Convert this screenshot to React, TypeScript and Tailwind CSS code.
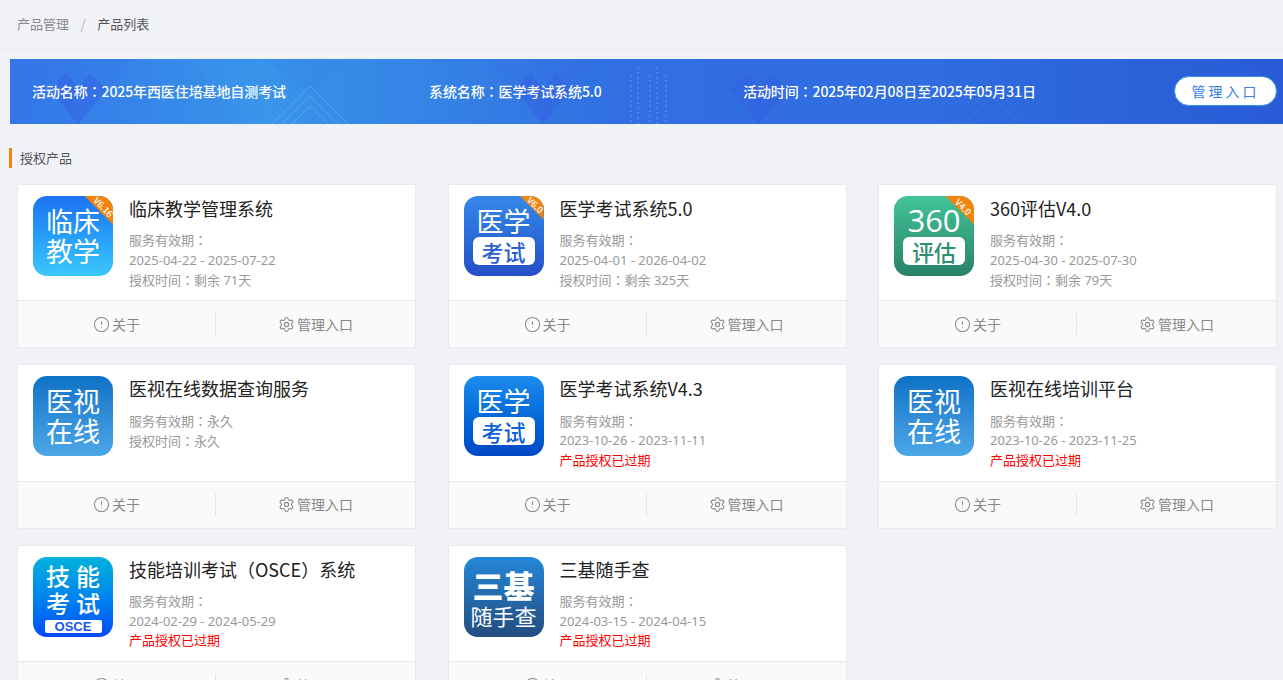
import { CircleAlert, Settings } from "lucide-react";
import type { ReactNode } from "react";

interface Product {
  name: string;
  icon: ReactNode;
  lines: string[];
  expired?: boolean;
}

// full-width punctuation sits centered in the original font, the TC cut does that
const Cjk = ({ text }: { text: string }) => (
  <>
    {text.split(/([：（）])/).map((part, i) =>
      i % 2 ? (
        <span key={i} className="font-['Noto_Sans_CJK_TC',sans-serif]">
          {part}
        </span>
      ) : (
        part
      )
    )}
  </>
);

const Ribbon = ({ text, leg }: { text: string; leg: "sm" | "lg" | "md" }) => (
  <>
    <div className={`absolute top-0 right-0 bg-[#f5840c] [clip-path:polygon(0_0,100%_0,100%_100%)] ${leg === "sm" ? "w-[24px] h-[24px]" : "w-[29px] h-[29px]"}`} />
    <span
      className={`absolute rotate-45 translate-x-1/2 -translate-y-1/2 text-white text-[9px] leading-none whitespace-nowrap font-medium ${
        leg === "sm" ? "top-[9px] right-[8px]" : leg === "md" ? "top-[11px] right-[11px]" : "top-[11px] right-[10px]"
      }`}
    >
      {text}
    </span>
  </>
);

const IconTile = ({ className, children }: { className: string; children: ReactNode }) => (
  <div className={`relative w-20 h-20 shrink-0 rounded-[14px] overflow-hidden text-white flex flex-col items-center ${className}`}>
    {children}
  </div>
);

const TwoRows = ({ top, bottom }: { top: string; bottom: string }) => (
  <div className="flex flex-col items-center justify-center h-full text-[27px] leading-[30px]">
    <span>{top}</span>
    <span>{bottom}</span>
  </div>
);

const LabelTile = ({ top, label, labelColor, topClass }: { top: string; label: string; labelColor: string; topClass: string }) => (
  <div className="flex flex-col items-center pt-[8px]">
    <span className={`leading-[33px] h-[33px] ${topClass}`}>{top}</span>
    <span className={`w-[62px] h-[28px] rounded-[6px] bg-white text-[22px] leading-[28px] text-center font-medium ${labelColor}`}>{label}</span>
  </div>
);

const products: Product[] = [
  {
    name: "临床教学管理系统",
    icon: (
      <IconTile className="bg-gradient-to-b from-[#1f70f2] to-[#3cc8fb]">
        <TwoRows top="临床" bottom="教学" />
        <Ribbon text="V6.16" leg="lg" />
      </IconTile>
    ),
    lines: ["服务有效期：", "2025-04-22 - 2025-07-22", "授权时间：剩余 71天"],
  },
  {
    name: "医学考试系统5.0",
    icon: (
      <IconTile className="bg-gradient-to-b from-[#3487ea] to-[#2450c8]">
        <LabelTile top="医学" label="考试" labelColor="text-[#2c5fd0]" topClass="text-[27px]" />
        <Ribbon text="V6.0" leg="sm" />
      </IconTile>
    ),
    lines: ["服务有效期：", "2025-04-01 - 2026-04-02", "授权时间：剩余 325天"],
  },
  {
    name: "360评估V4.0",
    icon: (
      <IconTile className="bg-gradient-to-b from-[#41c498] to-[#2a8268]">
        <LabelTile top="360" label="评估" labelColor="text-[#2f8d70]" topClass="text-[31px] font-['Open_Sans',sans-serif]" />
        <Ribbon text="V4.0" leg="md" />
      </IconTile>
    ),
    lines: ["服务有效期：", "2025-04-30 - 2025-07-30", "授权时间：剩余 79天"],
  },
  {
    name: "医视在线数据查询服务",
    icon: (
      <IconTile className="bg-gradient-to-b from-[#0b72c6] to-[#4ca7e8]">
        <TwoRows top="医视" bottom="在线" />
      </IconTile>
    ),
    lines: ["服务有效期：永久", "授权时间：永久"],
  },
  {
    name: "医学考试系统V4.3",
    icon: (
      <IconTile className="bg-gradient-to-b from-[#1b8bee] to-[#0048c4]">
        <LabelTile top="医学" label="考试" labelColor="text-[#0f62d6]" topClass="text-[27px]" />
      </IconTile>
    ),
    lines: ["服务有效期：", "2023-10-26 - 2023-11-11"],
    expired: true,
  },
  {
    name: "医视在线培训平台",
    icon: (
      <IconTile className="bg-gradient-to-b from-[#0b72c6] to-[#4ca7e8]">
        <TwoRows top="医视" bottom="在线" />
      </IconTile>
    ),
    lines: ["服务有效期：", "2023-10-26 - 2023-11-25"],
    expired: true,
  },
  {
    name: "技能培训考试（OSCE）系统",
    icon: (
      <IconTile className="bg-gradient-to-b from-[#06b2dc] to-[#0048f8]">
        <div className="flex flex-col items-center pt-[5px] pl-[6px] text-[24px] leading-[27px] tracking-[6px] font-medium">
          <span>技能</span>
          <span>考试</span>
        </div>
        <span className="mt-[4px] w-[57px] h-[13px] rounded-[2px] bg-white text-[#1457e8] text-[13px] leading-[13px] text-center font-bold font-['Liberation_Sans',sans-serif]">
          OSCE
        </span>
      </IconTile>
    ),
    lines: ["服务有效期：", "2024-02-29 - 2024-05-29"],
    expired: true,
  },
  {
    name: "三基随手查",
    icon: (
      <IconTile className="bg-gradient-to-b from-[#2387d8] to-[#234d80]">
        <div className="flex flex-col items-center pt-[10px]">
          <span className="text-[31px] leading-[36px] font-black">三基</span>
          <span className="text-[22px] leading-[24px]">随手查</span>
        </div>
      </IconTile>
    ),
    lines: ["服务有效期：", "2024-03-15 - 2024-04-15"],
    expired: true,
  },
];

const BannerArt = () => (
  <svg className="absolute inset-0 w-full h-full" viewBox="0 0 1273 65" preserveAspectRatio="none">
    <defs>
      <linearGradient id="bannerBg" x1="0" y1="0" x2="1" y2="0">
        <stop offset="0" stopColor="#3476e8" />
        <stop offset="0.2" stopColor="#3894ea" />
        <stop offset="0.48" stopColor="#316fe2" />
        <stop offset="0.72" stopColor="#2f6de0" />
        <stop offset="1" stopColor="#295bd6" />
      </linearGradient>
    </defs>
    <rect width="1273" height="65" fill="url(#bannerBg)" />
    {[68, 533, 749].map((x) => (
      <g key={x}>
        <polygon points={`${x - 58},0 ${x + 58},0 ${x},65`} fill="#3a5ce0" opacity="0.08" />
        <polygon points={`${x - 28},30 ${x - 12},14 ${x},30 ${x + 12},14 ${x + 28},30 ${x},66`} fill="#3558e2" opacity="0.35" />
      </g>
    ))}
    <polygon points="180,0 225,0 290,65 240,65" fill="#3fa0ee" opacity="0.14" />
    <polygon points="255,0 341,0 300,34" fill="#2f72e4" opacity="0.12" />
    {[300, 982].map((x) => (
      <g key={x} fill="none" stroke="#ffffff" opacity={x === 300 ? 0.16 : 0.05}>
        <polyline points={`${x - 38},65 ${x},27 ${x + 38},65`} />
        <polyline points={`${x - 28},65 ${x},37 ${x + 28},65`} />
        <polyline points={`${x - 18},65 ${x},47 ${x + 18},65`} />
      </g>
    ))}
    {[621, 628, 640, 647, 656].map((x, i) => (
      <line key={x} x1={x} y1={i % 2 ? 8 : 16} x2={x} y2="65" stroke="#7fa8f5" strokeWidth="2" strokeDasharray="2 3" opacity="0.35" />
    ))}
  </svg>
);

const ProductCard = ({ product }: { product: Product }) => (
  <div className="h-[164.5px] bg-white border border-[#e8eaee] flex flex-col">
    <div className="flex-1 flex pt-[11px] pl-[15px] min-h-0">
      {product.icon}
      <div className="ml-4 flex flex-col min-w-0">
        <h3 className="text-[18px] leading-[25px] text-[#222] font-normal">
          <Cjk text={product.name} />
        </h3>
        <div className="mt-[9.5px] text-[13px] leading-[19.5px] text-[#999] font-['Noto_Sans','Noto_Sans_CJK_SC',sans-serif]">
          {product.lines.map((line) => (
            <p key={line}>
              <Cjk text={line} />
            </p>
          ))}
          {product.expired && <p className="text-[#ff0000]">产品授权已过期</p>}
        </div>
      </div>
    </div>
    <div className="h-[47px] shrink-0 bg-[#fafafa] border-t border-[#e8e8e8] flex items-center text-[14px] text-[#888]">
      <div className="w-[197px] flex items-center justify-center gap-[2px]">
        <CircleAlert className="w-[17px] h-[17px]" strokeWidth={1.5} />
        <span>关于</span>
      </div>
      <div className="w-px h-[22px] bg-[#e4e4e4]" />
      <div className="flex-1 flex items-center justify-center gap-[2px]">
        <Settings className="w-[17px] h-[17px]" strokeWidth={1.5} />
        <span>管理入口</span>
      </div>
    </div>
  </div>
);

export default function App() {
  return (
    <div className="h-[680px] overflow-hidden bg-[#f0f2f7] [text-spacing-trim:space-all] font-['Noto_Sans_CJK_SC','Noto_Sans',sans-serif]">
      {/* Breadcrumb */}
      <div className="h-[50px] pb-[2px] border-b border-[#e6e8ec] flex items-center pl-[17px] text-[13px]">
        <span className="text-[#8a8a8a]">产品管理</span>
        <span className="mx-[11.5px] text-[#b0b0b0]">/</span>
        <span className="text-[#555]">产品列表</span>
      </div>

      {/* Activity banner */}
      <div className="relative mt-[9px] ml-[10px] h-[65px] pb-[1px] flex items-center text-[14px] font-medium tracking-[-0.1px] text-white">
        <BannerArt />
        <span className="relative ml-[22px] w-[397px]">
          <Cjk text="活动名称：2025年西医住培基地自测考试" />
        </span>
        <span className="relative w-[314px]">
          <Cjk text="系统名称：医学考试系统5.0" />
        </span>
        <span className="relative">
          <Cjk text="活动时间：2025年02月08日至2025年05月31日" />
        </span>
        <button className="relative ml-auto mr-[6px] w-[103px] h-[30px] rounded-full bg-white border border-[#3a94ea] text-[14px] font-normal tracking-[3px] text-[#3a7fe0]">
          管理入口
        </button>
      </div>

      {/* Section title */}
      <div className="mt-6 ml-[9px] h-5 flex items-center border-l-[3px] border-[#f5840c] pl-2 text-[13px] text-[#555]">授权产品</div>

      {/* Product cards */}
      <div className="mt-[15.5px] mr-[6px] ml-[17px] grid grid-cols-3 gap-x-[31.5px] gap-y-4">
        {products.map((product) => (
          <ProductCard key={product.name} product={product} />
        ))}
      </div>
    </div>
  );
}
